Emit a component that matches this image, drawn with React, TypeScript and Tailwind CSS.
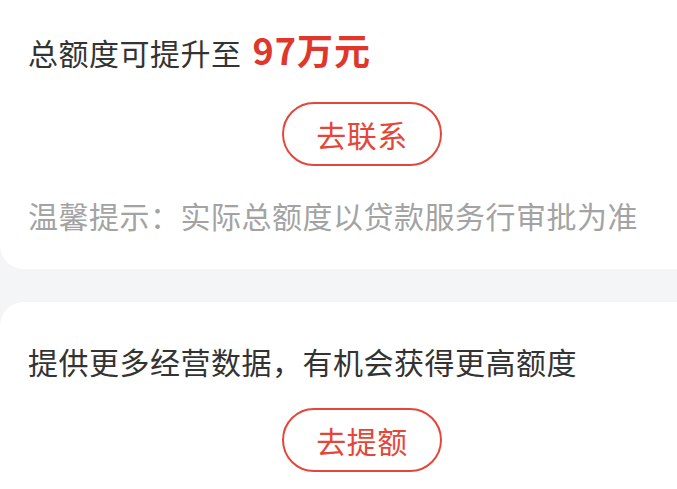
import * as React from "react";

const font = {
  fontFamily: '"Noto Sans CJK SC", "Noto Sans", sans-serif',
};

const PillButton: React.FC<{ label: string }> = ({ label }) => (
  <button className="mx-auto flex h-[64px] w-[160px] items-center justify-center rounded-full border-2 border-[#e5463a] bg-white text-[30px] leading-none tracking-[0.5px] text-[#e5463a]">
    {label}
  </button>
);

export default function App() {
  return (
    <div
      className="h-[489px] w-[677px] overflow-hidden bg-[#f4f5f7]"
      style={font}
    >
      <div className="w-[724px] rounded-b-[24px] bg-white pb-[39px] pt-[34px]">
        <p className="flex items-baseline pl-[28px] text-[30px] leading-[30px] tracking-[0.5px] text-[#333333]">
          总额度可提升至
          <span className="ml-[11px] text-[36px] font-bold tracking-[1px] text-[#e0362b]">
            97万元
          </span>
        </p>
        <div className="mt-[35px]">
          <PillButton label="去联系" />
        </div>
        <p className="mt-[34px] pl-[28px] text-[30px] leading-[30px] tracking-[0.5px] text-[#a3a3a3]">
          温馨提示：实际总额度以贷款服务行审批为准
        </p>
      </div>

      <div className="mt-[33px] w-[724px] rounded-t-[24px] bg-white pb-[40px] pt-[44px]">
        <p className="pl-[28px] text-[30px] leading-[30px] tracking-[0.5px] text-[#333333]">
          提供更多经营数据，有机会获得更高额度
        </p>
        <div className="mt-[32px]">
          <PillButton label="去提额" />
        </div>
      </div>
    </div>
  );
}
